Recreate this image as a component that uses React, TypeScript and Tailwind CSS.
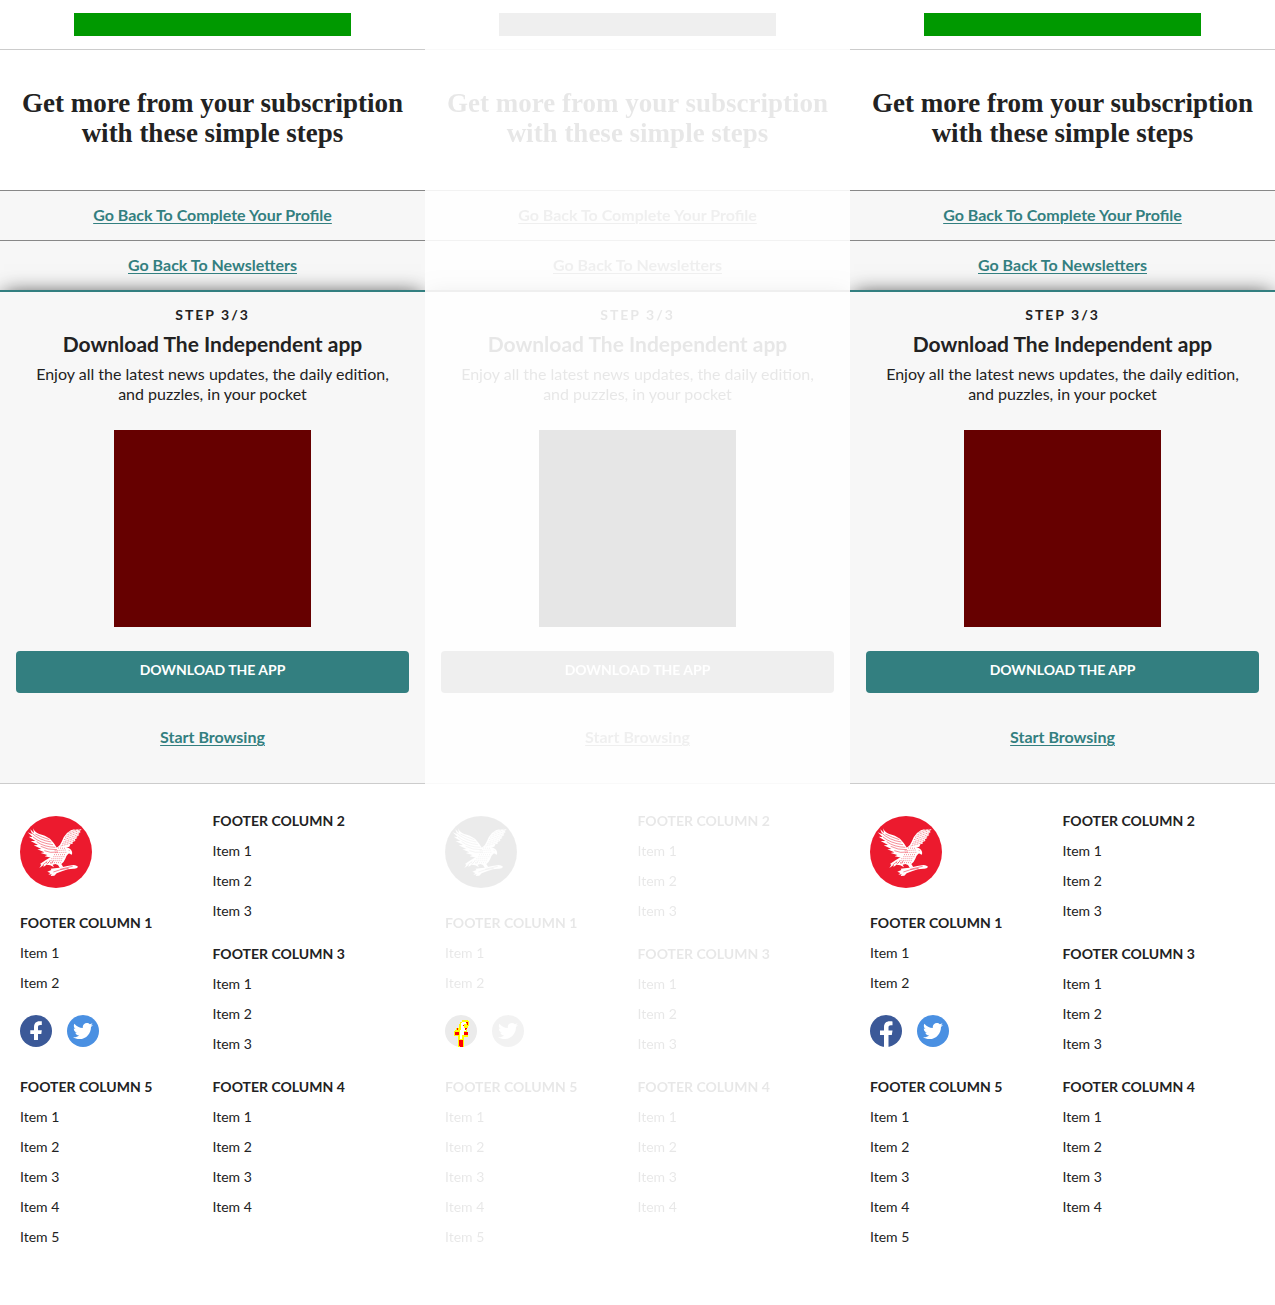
import React from "react";
import { FaTwitter } from "react-icons/fa";

type Variant = "before" | "diff" | "after";

function EagleLogo() {
  return (
    <svg viewBox="0 0 216 216" className="h-[72px] w-[72px]" role="img" aria-label="The Independent">
      <circle cx="108" cy="108" r="108" fill="#ec1a2e" />
      <g fill="#fff">
        <path d="M39 37 Q44 49 56 53 Q76 57 90 68 Q101 79 109 93 L120 120 L98 126 L74 121 L82 117 L62 111 L73 109 L52 100 L64 99 L41 88 L54 87 L32 75 L46 75 L26 62 L38 63 L23 49 L36 54 L31 40 L42 51 Z" />
        <path d="M111 95 Q121 88 125 77 Q130 62 141 51 Q152 41 166 39 L161 43 L176 38 L172 42 L185 39 L179 46 L182 48 L175 54 L178 57 L170 62 L172 66 L165 70 L166 75 L159 77 L158 83 L151 85 L148 92 L130 96 Z" />
        <path d="M108 95 Q124 88 140 94 Q153 98 156 107 Q158 113 154 117 Q151 111 145 113 Q139 118 136 128 Q132 138 124 144 L130 154 L120 157 L114 147 L106 144 L98 146 L102 154 L91 148 L80 146 L70 153 L72 146 L58 156 L64 146 L60 144 L74 134 L96 121 Z" />
        <path d="M82 167 L94 162 L92 158 L104 157 L118 155 L142 150 L160 147 Q172 148 174 153 Q170 159 160 158 L144 160 L128 165 L110 172 L103 179 L92 180 L95 175 L85 176 L91 171 Z" />
      </g>
      <g fill="none" stroke="#ec1a2e" strokeWidth="1.500">
        <path d="M34 50 Q58 73 94 78M39 63 Q62 82 99 86M50 77 Q72 93 106 94M62 91 Q82 102 111 101M73 104 Q90 112 114 108M46 54 Q66 64 88 71" />
        <path strokeDasharray="3 2" d="M140 57 L182 42M135 64 L179 49M132 71 L176 56M130 78 L172 63M126 84 L167 71M122 90 L161 79M146 50 L174 40" />
        <path strokeDasharray="3 3" d="M104 104 L138 102M106 110 L140 109M102 116 L136 116M100 122 L134 122M94 128 L130 128M88 134 L126 134M78 140 L122 140M114 96 L136 97" />
        <path d="M100 168 Q122 159 146 157M120 160 L158 151M68 147 L82 136M80 145 L91 134M92 144 L100 134" />
        <path d="M146 103 L149 104" />
      </g>
    </svg>
  );
}

function FacebookIcon({ variant }: { variant: Variant }) {
  if (variant === "diff") {
    return (
      <svg viewBox="0 0 32 32" className="h-8 w-8" aria-hidden="true">
        <circle cx="16" cy="16" r="16" fill="#ebebeb" />
        <g shapeRendering="crispEdges">
          <path fill="#ff0" d="M17 5h6v1h1v5h-1v2h-1v4h1v5h-4v10h-6V21h-4v-5h1v-1h1v-2h3V9h1V7h2z" />
          <path fill="#fff" d="M17 7h4v2h-2v4h2v3h-2v4h-2v4h-2v-9h1V8h1z" />
          <path fill="#f00" d="M21 7h2v3h-1V8h-1zM18 10h1v1h-1zM12 13h1v2h-1zM20 13h2v1h-1v1h-1zM10 17h4v3h-4zM19 17h4v3h-4zM14 25h4v7h-3v-1h-1z" />
        </g>
      </svg>
    );
  }
  return (
    <svg viewBox="0 0 32 32" className="h-8 w-8" aria-hidden="true">
      <circle cx="16" cy="16" r="16" fill="#3b5998" />
      {variant === "before" ? (
        <path fill="#fff" d="M14 25V19h-3.700v-3.800H14v-2.700c0-4.100 2-6.300 5.500-6.300h2.300v3.700h-1.500c-1.700 0-2.300.7-2.300 2.200v3.100h3.800L21.300 19H18v6z" />
      ) : (
        <path fill="#fff" d="M14 31.900V20h-4v-4.500h4v-3.300c0-4 2.200-6 5.800-6 1.200 0 2.700.2 2.700.2v3.800h-1.700c-1.800 0-2.300 1-2.300 2.200v3.100h4L21.800 20h-3.300v11.900z" />
      )}
    </svg>
  );
}

function FooterGroup({ title, count }: { title: string; count: number }) {
  return (
    <section className="text-sm leading-[30px]">
      <h3 className="font-bold">{title}</h3>
      <ul>
        {Array.from({ length: count }, (_, i) => (
          <li key={i}>
            <a href="#">Item {i + 1}</a>
          </li>
        ))}
      </ul>
    </section>
  );
}

function StepLink({ children }: { children: string }) {
  return (
    <a href="#" className="text-base font-bold text-[#337f80] underline decoration-1 underline-offset-2">
      {children}
    </a>
  );
}

function Panel({ variant }: { variant: Variant }) {
  const diff = variant === "diff";
  const fade = diff ? "opacity-10 grayscale" : "";
  return (
    <div className="min-w-0 overflow-hidden bg-white text-[#222]">
      <div className={fade}>
        <header className="flex justify-center border-b border-[#ccc] py-[13px]">
          <div className="h-[23px] w-[277px] bg-[#009900]" />
        </header>
        <h1 className="px-4 pt-[38px] pb-[42px] text-center font-['Liberation_Serif',serif] text-[27px] leading-[30px] font-bold">
          Get more from your subscription with these simple steps
        </h1>
        <div className="flex h-[50px] items-center justify-center border-t border-[#888] bg-[#f7f7f7] pb-[2px]">
          <StepLink>Go Back To Complete Your Profile</StepLink>
        </div>
        <div className="flex h-[50px] items-center justify-center border-t border-[#888] bg-[#f7f7f7] pb-[2px]">
          <StepLink>Go Back To Newsletters</StepLink>
        </div>
        <main className="border-t-2 border-b border-t-[#337f80] border-b-[#ccc] bg-[#f7f7f7] px-4 pt-[13px] pb-[34px] text-center shadow-[0_0_20px_-4px_rgba(0,0,0,0.8)]">
          <p className="text-sm leading-5 font-bold tracking-[2px]">STEP 3/3</p>
          <h2 className="mt-1 text-[21px] leading-[30px] font-bold">Download The Independent app</h2>
          <p className="mt-[5px] text-base leading-5">
            Enjoy all the latest news updates, the daily edition, <br />
            and puzzles, in your pocket
          </p>
          <div className="mx-auto mt-[26px] h-[197px] w-[197px] bg-[#660000]" />
          <button className="mt-6 block h-[42px] w-full rounded-[4px] bg-[#337f80] pb-1 text-sm font-bold text-white">
            DOWNLOAD THE APP
          </button>
          <div className="mt-8">
            <StepLink>Start Browsing</StepLink>
          </div>
        </main>
      </div>
      <footer className="relative grid grid-cols-2 bg-white px-5 pt-[22px] pb-[53px]">
        <div>
          <div className={fade}>
            <div className="mt-[10px] mb-5">
              <EagleLogo />
            </div>
            <FooterGroup title="FOOTER COLUMN 1" count={2} />
          </div>
          <div className="mt-[17px] mb-[25px] flex gap-[15px]">
            <a href="#" aria-label="Facebook">
              <FacebookIcon variant={variant} />
            </a>
            <a href="#" aria-label="Twitter" className={fade}>
              <span className="flex h-8 w-8 items-center justify-center rounded-full bg-[#4a90e2]">
                <FaTwitter size={20} color="#fff" />
              </span>
            </a>
          </div>
          <div className={fade}>
            <FooterGroup title="FOOTER COLUMN 5" count={5} />
          </div>
        </div>
        <div className={diff ? "flex flex-col gap-[13px] opacity-10 grayscale" : "flex flex-col gap-[13px]"}>
          <FooterGroup title="FOOTER COLUMN 2" count={3} />
          <FooterGroup title="FOOTER COLUMN 3" count={3} />
          <FooterGroup title="FOOTER COLUMN 4" count={4} />
        </div>
      </footer>
    </div>
  );
}

export default function App() {
  return (
    <div className="grid grid-cols-3 bg-white font-['Lato',sans-serif]">
      <Panel variant="before" />
      <Panel variant="diff" />
      <Panel variant="after" />
    </div>
  );
}
